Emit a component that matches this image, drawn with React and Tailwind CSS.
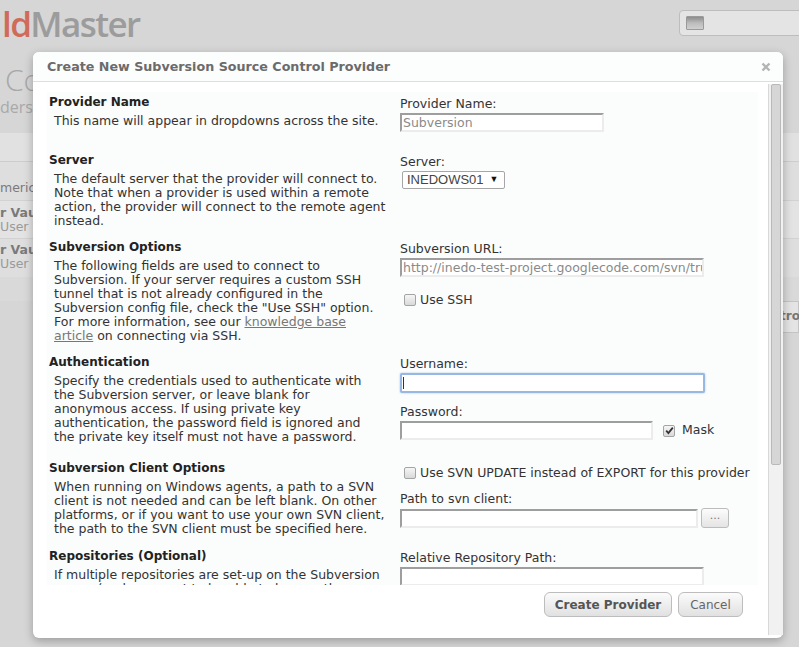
import React from 'react';

const ui = "font-['DejaVu_Sans',Verdana,sans-serif]";

const Check = ({ checked }) => (
  <span className="flex h-[12px] w-[12px] shrink-0 items-center justify-center rounded-[2px] border border-[#a4a4a4] bg-linear-to-b from-[#f6f6f6] to-[#d9d9d9]">
    {checked && (
      <svg width="9" height="9" viewBox="0 0 9 9">
        <path d="M1.2 4.6 L3.4 7 L7.8 1.6" fill="none" stroke="#333" strokeWidth="1.8" />
      </svg>
    )}
  </span>
);

const inputCls =
  'h-[19px] border-2 border-t-[#9e9e9e] border-l-[#9e9e9e] border-r-[#ececec] border-b-[#ececec] bg-white px-[1px] text-[12.5px] leading-[15px] text-[#8a8a8a] overflow-hidden whitespace-nowrap';

const Label = ({ children, className = 'mt-[3px]' }) => (
  <div className={`${className} text-[12.5px] leading-[14px] text-[#333]`}>{children}</div>
);

const Row = ({ title, lines, children }) => (
  <div className="flex items-start">
    <div className="w-[351px] shrink-0 pb-[11px]">
      <div className="text-[12px] font-bold leading-[16px] text-[#222]">{title}</div>
      <div className="mt-[4px] pl-[5px] text-[12.5px] leading-[14px] text-[#333]">
        {lines.map((l, i) => (
          <div key={i} className="whitespace-nowrap">{l}</div>
        ))}
      </div>
    </div>
    <div className="flex-1 pb-[20px]">{children}</div>
  </div>
);

export default function App() {
  return (
    <div className="relative h-[647px] w-[799px] overflow-hidden bg-[#d6d6d6] font-['DejaVu_Sans',Verdana,sans-serif]">
      {/* page beneath the overlay */}
      <div className="flex h-[62px] items-start justify-between">
        <div className="pl-[2px] pt-[4px] font-['Open_Sans',sans-serif] text-[35px] font-semibold leading-[40px] tracking-[-1.6px]">
          <span className="text-[#d06b59]">ld</span>
          <span className="text-[#9c9c9c]">Master</span>
        </div>
        <div className="-mr-[12px] mt-[10px] flex h-[26px] w-[132px] items-center rounded-[4px] border border-[#bdbdbd] bg-[#e4e4e4] pl-[6px]">
          <span className="h-[14px] w-[18px] rounded-[1px] border border-[#9a9a9a] bg-linear-to-b from-[#8d8d8d] via-[#bcbcbc] to-[#cfcfcf]" />
        </div>
      </div>
      <div className="h-[71px] pl-[5px]">
        <div className="font-['Open_Sans',sans-serif] text-[30px] font-light leading-[36px] text-[#a8a8a8]">Co</div>
        <div className="-ml-[5px] font-['Open_Sans',sans-serif] text-[16px] leading-[18px] text-[#a9a9a9]">ders</div>
      </div>
      <div className="h-[29px] border-b border-[#cdcdcd] bg-[#e1e1e1]" />
      <div className="bg-[#dedede] text-[12.5px]">
        <div className="h-[39px] border-b border-[#d2d2d2] pt-[19px] leading-[14px] text-[#7a7a7a]">merica</div>
        <div className="h-[38px] border-b border-[#d2d2d2] bg-[#e3e3e3] pt-[5px] leading-[14px]">
          <div className="font-bold text-[#7a7a7a]">r Vau</div>
          <div className="text-[#9a9a9a]">User I</div>
        </div>
        <div className="h-[38px] pt-[4px] leading-[14px]">
          <div className="font-bold text-[#7a7a7a]">r Vau</div>
          <div className="text-[#9a9a9a]">User I</div>
        </div>
      </div>
      <div className="flex h-[24px] justify-end bg-[#d9d9d9]" />
      <div className="flex h-[32px] justify-end">
        <div className="w-[22px] border border-[#c4c4c4] bg-[#e4e4e4] pl-[2px] pt-[7px] text-[12px] font-bold leading-[14px] text-[#777]">tro</div>
      </div>

      {/* modal */}
      <div className={`${ui} absolute left-[33px] top-[52px] flex h-[586px] w-[750px] flex-col rounded-[6px] bg-white shadow-[0_3px_10px_rgba(0,0,0,0.28)]`}>
        <div className="flex h-[30px] shrink-0 items-center justify-between rounded-t-[6px] border-b border-[#dedede] bg-[#fcfdfd] pl-[14px] pr-[12px]">
          <span className="text-[12.7px] font-bold text-[#6b6b6b]">Create New Subversion Source Control Provider</span>
          <svg width="10" height="10" viewBox="0 0 10 10">
            <path d="M1.5 1.5 L8.5 8.5 M8.5 1.5 L1.5 8.5" stroke="#b4b4b4" strokeWidth="2.4" />
          </svg>
        </div>

        <div className="flex min-h-0 flex-1">
          <div className="flex w-[735px] flex-col pl-[14px] pt-[10px]">
            <div className="h-[493px] w-[711px] overflow-hidden bg-[#fbfcfc] pl-[2px] pt-[2px]">
              <Row title="Provider Name" lines={['This name will appear in dropdowns across the site.']}>
                <Label>Provider Name:</Label>
                <div className={`${inputCls} mt-[2px] w-[204px]`}>Subversion</div>
              </Row>

              <Row
                title="Server"
                lines={[
                  'The default server that the provider will connect to.',
                  'Note that when a provider is used within a remote',
                  'action, the provider will connect to the remote agent',
                  'instead.',
                ]}
              >
                <Label>Server:</Label>
                <div className="ml-[2px] mt-[2px] flex h-[18px] w-[103px] items-center rounded-[2px] border border-[#a6a6a6] bg-white pl-[4px] font-['Liberation_Sans',Arial,sans-serif] text-[13px] text-[#444]">
                  INEDOWS01
                  <span className="ml-[6px] text-[9px] text-[#111]">▼</span>
                </div>
              </Row>

              <Row
                title="Subversion Options"
                lines={[
                  'The following fields are used to connect to',
                  'Subversion. If your server requires a custom SSH',
                  'tunnel that is not already configured in the',
                  'Subversion config file, check the "Use SSH" option.',
                  <>
                    For more information, see our <span className="text-[#777] underline">knowledge base</span>
                  </>,
                  <>
                    <span className="text-[#777] underline">article</span> on connecting via SSH.
                  </>,
                ]}
              >
                <Label>Subversion URL:</Label>
                <div className={`${inputCls} mt-[2px] w-[304px]`}>http://inedo-test-project.googlecode.com/svn/trunk</div>
                <div className="ml-[4px] mt-[17px] flex h-[12px] items-center gap-[4px]">
                  <Check />
                  <span className="text-[12.5px] text-[#333]">Use SSH</span>
                </div>
              </Row>

              <Row
                title="Authentication"
                lines={[
                  'Specify the credentials used to authenticate with',
                  'the Subversion server, or leave blank for',
                  'anonymous access. If using private key',
                  'authentication, the password field is ignored and',
                  'the private key itself must not have a password.',
                ]}
              >
                <Label>Username:</Label>
                <div className="mt-[2px] h-[20px] w-[305px] rounded-[2px] border-2 border-[#98b8e4] bg-white shadow-[0_0_2px_rgba(80,130,210,0.5)]">
                  <div className="ml-[1px] mt-[2px] h-[12px] w-px bg-[#333]" />
                </div>
                <Label className="mt-[12px]">Password:</Label>
                <div className="mt-[2px] flex items-center">
                  <div className={`${inputCls} w-[253px]`} />
                  <span className="ml-[10px]"><Check checked /></span>
                  <span className="ml-[7px] text-[12.5px] text-[#333]">Mask</span>
                </div>
              </Row>

              <Row
                title="Subversion Client Options"
                lines={[
                  'When running on Windows agents, a path to a SVN',
                  'client is not needed and can be left blank. On other',
                  'platforms, or if you want to use your own SVN client,',
                  'the path to the SVN client must be specified here.',
                ]}
              >
                <div className="ml-[4px] mt-[7px] flex h-[12px] items-center gap-[4px]">
                  <Check />
                  <span className="whitespace-nowrap text-[12.5px] text-[#333]">Use SVN UPDATE instead of EXPORT for this provider</span>
                </div>
                <Label className="mt-[13px]">Path to svn client:</Label>
                <div className="mt-[2px] flex items-center">
                  <div className={`${inputCls} w-[298px]`} />
                  <button className="ml-[3px] flex h-[20px] w-[28px] items-center justify-center rounded-[3px] border border-[#bcbcbc] bg-linear-to-b from-[#fcfcfc] to-[#e4e4e4] pb-[3px] text-[11px] text-[#777]">
                    ...
                  </button>
                </div>
              </Row>

              <Row
                title="Repositories (Optional)"
                lines={[
                  'If multiple repositories are set-up on the Subversion',
                  'server (and you want to be able to browse those',
                  'repositories from within BuildMaster), enter the',
                ]}
              >
                <Label>Relative Repository Path:</Label>
                <div className={`${inputCls} mt-[2px] w-[304px]`} />
              </Row>
            </div>

            <div className="mt-[7px] flex justify-end gap-[6px] pr-[25px]">
              <button className="h-[25px] w-[128px] rounded-[6px] border border-[#bdbdbd] bg-linear-to-b from-[#fbfbfb] to-[#e1e1e1] text-[12px] font-bold text-[#555]">
                Create Provider
              </button>
              <button className="h-[25px] w-[65px] rounded-[6px] border border-[#bdbdbd] bg-linear-to-b from-[#fbfbfb] to-[#e1e1e1] text-[12px] text-[#666]">
                Cancel
              </button>
            </div>
          </div>

          {/* scrollbar */}
          <div className="mb-[3px] mt-[2px] w-[15px] border-l border-[#d8d8d8] bg-[#f1f1f1] px-[2px]">
            <div className="h-[381px] rounded-[2px] border border-[#b9b9b9] bg-[#d6d6d6]" />
          </div>
        </div>
      </div>
    </div>
  );
}
